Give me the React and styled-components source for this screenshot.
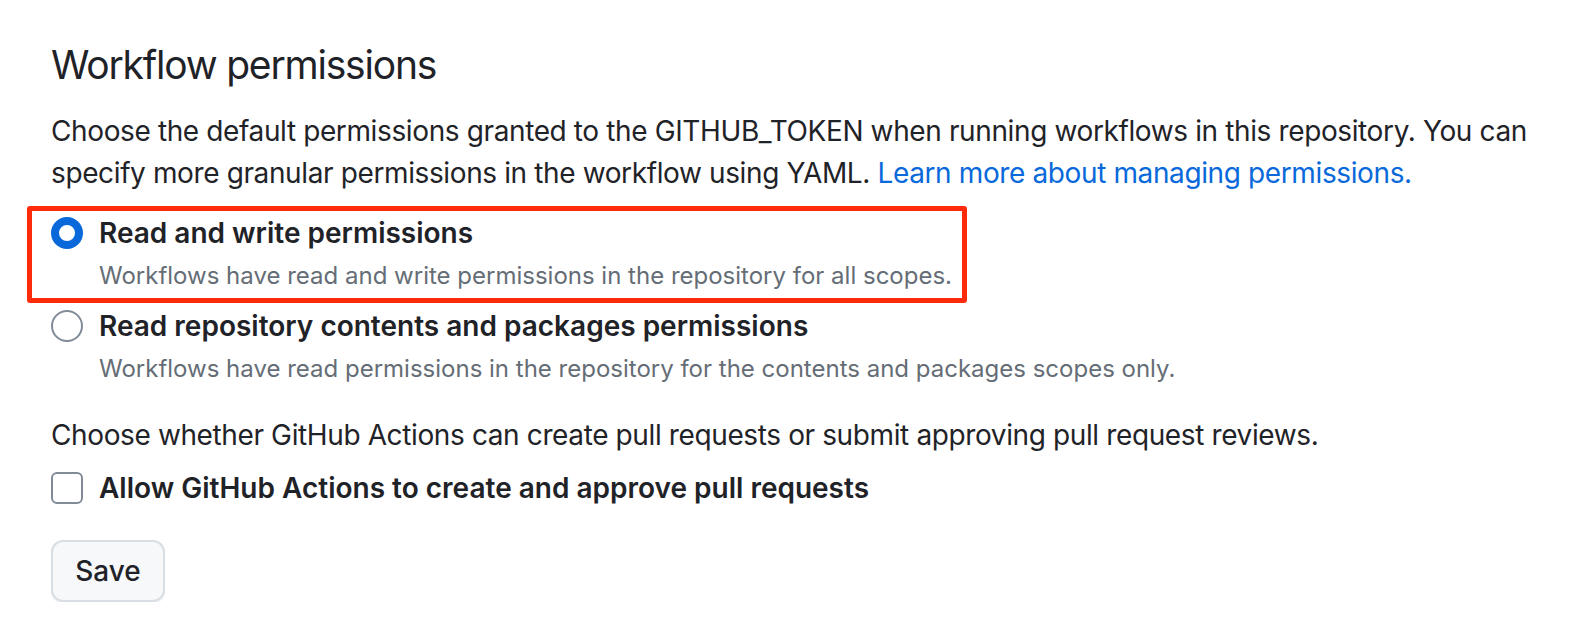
import { createGlobalStyle } from 'styled-components'
import styled from 'styled-components'

const GlobalStyle = createGlobalStyle`
	html, body {
		margin: 0;
		background: #ffffff;
	}
	body {
		font-family: Inter, "Liberation Sans", sans-serif;
		color: #1f2328;
	}
`

const Page = styled.main`
	padding: 40px 10px 0 51px;
	display: flex;
	flex-direction: column;
	align-items: flex-start;
`

const Heading = styled.h2`
	margin: 0;
	font-size: 39px;
	line-height: 50px;
	font-weight: 400;
	letter-spacing: -1.2px;
`

const Text = styled.p`
	margin: ${({ $top }) => $top}px 0 0;
	font-size: 28px;
	line-height: 42px;
	letter-spacing: -0.38px;
`

const Link = styled.a`
	color: #0969da;
	text-decoration: none;
`

const Option = styled.label`
	position: relative;
	display: flex;
	align-items: flex-start;
	gap: 16px;
	margin-top: ${({ $top }) => $top}px;
	cursor: pointer;

	${({ $highlight }) =>
		$highlight &&
		`
		&::after {
			content: '';
			position: absolute;
			top: -6px;
			left: -24px;
			width: 940px;
			bottom: -9px;
			border: 5px solid #fe2b0b;
			border-radius: 3px;
			box-sizing: border-box;
			pointer-events: none;
		}
	`}
`

const Radio = styled.input.attrs({ type: 'radio' })`
	appearance: none;
	margin: 5px 0 0;
	flex: none;
	width: 32px;
	height: 32px;
	border-radius: 50%;
	box-sizing: border-box;
	background: #ffffff;
	border: 2px solid #818b98;

	&:checked {
		border: 8px solid #0969da;
	}
`

const Checkbox = styled.input.attrs({ type: 'checkbox' })`
	appearance: none;
	margin: 5px 0 0;
	flex: none;
	width: 32px;
	height: 32px;
	border-radius: 6px;
	box-sizing: border-box;
	background: #ffffff;
	border: 2px solid #818b98;
`

const OptionBody = styled.span`
	display: flex;
	flex-direction: column;
`

const OptionTitle = styled.span`
	font-size: 28px;
	line-height: 42px;
	font-weight: 600;
`

const OptionNote = styled.span`
	margin-top: 4px;
	font-size: 24px;
	line-height: 36px;
	color: #656d76;
`

const Button = styled.button`
	margin-top: 31px;
	height: 62px;
	width: 114px;
	padding: 0;
	font-family: inherit;
	font-size: 28px;
	font-weight: 500;
	color: #1f2328;
	background: #f6f8fa;
	border: 2px solid #d8dee4;
	border-radius: 12px;
	box-shadow: 0 2px 0 rgba(31, 35, 40, 0.04);
	cursor: pointer;
`

function App() {
	return (
		<>
			<GlobalStyle />
			<Page>
				<Heading>Workflow permissions</Heading>
				<Text $top={20}>
					Choose the default permissions granted to the GITHUB_TOKEN when running workflows in this
					repository. You can specify more granular permissions in the workflow using YAML.{' '}
					<Link href="#">Learn more about managing permissions.</Link>
				</Text>
				<Option $top={18} $highlight>
					<Radio name="perm" defaultChecked />
					<OptionBody>
						<OptionTitle>Read and write permissions</OptionTitle>
						<OptionNote>
							Workflows have read and write permissions in the repository for all scopes.
						</OptionNote>
					</OptionBody>
				</Option>
				<Option $top={11}>
					<Radio name="perm" />
					<OptionBody>
						<OptionTitle>Read repository contents and packages permissions</OptionTitle>
						<OptionNote>
							Workflows have read permissions in the repository for the contents and packages scopes
							only.
						</OptionNote>
					</OptionBody>
				</Option>
				<Text $top={27}>
					Choose whether GitHub Actions can create pull requests or submit approving pull request
					reviews.
				</Text>
				<Option $top={11}>
					<Checkbox />
					<OptionTitle>Allow GitHub Actions to create and approve pull requests</OptionTitle>
				</Option>
				<Button type="button">Save</Button>
			</Page>
		</>
	)
}

export default App
